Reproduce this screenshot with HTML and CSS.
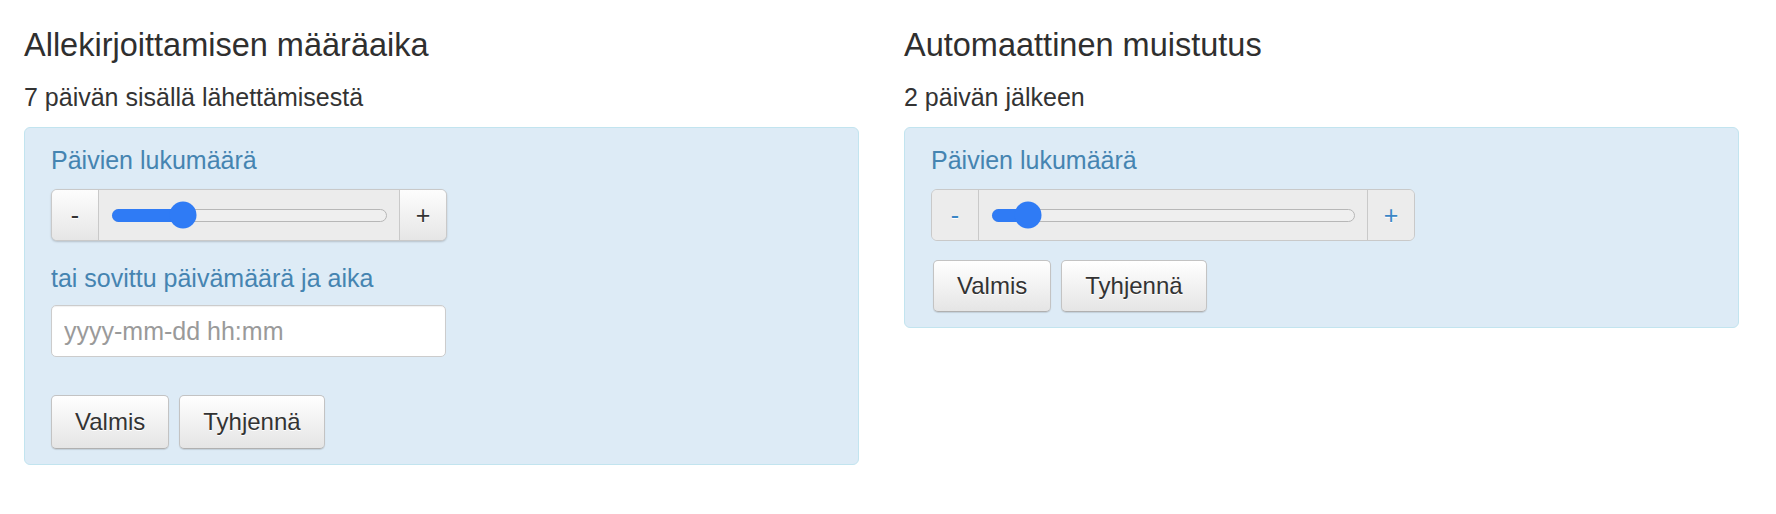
FILE: index.html
```html
<!DOCTYPE html>
<html lang="fi">
<head>
<meta charset="utf-8">
<title>Määräaika</title>
<link rel="stylesheet" href="styles.css">
</head>
<body>
<div class="page">
  <section class="col">
    <h3 class="title">Allekirjoittamisen määräaika</h3>
    <p class="summary">7 päivän sisällä lähettämisestä</p>
    <div class="panel">
      <div class="label">Päivien lukumäärä</div>
      <div class="slider slider-raised" style="width:396px">
        <button class="step step-raised">-</button>
        <div class="mid">
          <div class="track">
            <div class="fill" style="width:25.6%"></div>
            <div class="thumb" style="left:25.6%"></div>
          </div>
        </div>
        <button class="step step-raised step-right">+</button>
      </div>
      <div class="label">tai sovittu päivämäärä ja aika</div>
      <input class="date-input" type="text" placeholder="yyyy-mm-dd hh:mm">
      <div class="actions actions-spaced">
        <button class="btn">Valmis</button>
        <button class="btn">Tyhjennä</button>
      </div>
    </div>
  </section>
  <section class="col">
    <h3 class="title">Automaattinen muistutus</h3>
    <p class="summary">2 päivän jälkeen</p>
    <div class="panel">
      <div class="label">Päivien lukumäärä</div>
      <div class="slider" style="width:484px">
        <button class="step step-flat">-</button>
        <div class="mid">
          <div class="track">
            <div class="fill" style="width:9.6%"></div>
            <div class="thumb" style="left:9.6%"></div>
          </div>
        </div>
        <button class="step step-flat step-right">+</button>
      </div>
      <div class="actions actions-tight">
        <button class="btn btn-short">Valmis</button>
        <button class="btn btn-short">Tyhjennä</button>
      </div>
    </div>
  </section>
</div>
</body>
</html>
```

FILE: styles.css
```css
* { box-sizing: border-box; }

html, body {
  margin: 0;
  background: #ffffff;
}

body {
  font-family: "Liberation Sans", Arial, Helvetica, sans-serif;
  color: #333333;
}

.page {
  display: grid;
  grid-template-columns: 835px 835px;
  column-gap: 45px;
  padding: 27px 0 0 24px;
}

.title {
  margin: 0;
  font-size: 32.5px;
  line-height: 36px;
  font-weight: normal;
  color: #2f2f2f;
}

.summary {
  margin: 16px 0 0;
  font-size: 25px;
  line-height: 36px;
}

.panel {
  margin-top: 12px;
  background: #ddebf6;
  border: 1px solid #c2e4ef;
  border-radius: 6px;
  padding: 14px 26px 15px 26px;
}

.label {
  font-size: 25px;
  line-height: 36px;
  color: #4584b1;
  margin-bottom: 11px;
}

.slider {
  display: flex;
  height: 52px;
  background: #ececec;
  border: 1px solid #c9c9c9;
  border-radius: 6px;
  margin-bottom: 19px;
}

.slider + .label {
  margin-bottom: 9px;
}

.slider-raised {
  box-shadow: 0 1px 2px rgba(0, 0, 0, 0.18);
}

.step {
  flex: 0 0 47px;
  border: 0;
  border-right: 1px solid #c9c9c9;
  margin: 0;
  padding: 0;
  font-family: "Liberation Sans", Arial, sans-serif;
  font-size: 25px;
  line-height: 50px;
  text-align: center;
  cursor: pointer;
}

.step-right {
  border-right: 0;
  border-left: 1px solid #c9c9c9;
}

.step-raised {
  background: linear-gradient(#fdfdfd, #e6e6e6);
  color: #333333;
  text-shadow: 0 1px 0 #ffffff;
}

.slider-raised .step:first-child { border-radius: 5px 0 0 5px; }
.slider-raised .step-right { border-radius: 0 5px 5px 0; }

.step-flat {
  background: #ececec;
  color: #3a86c6;
  text-shadow: 0 1px 0 #ffffff;
}

.slider .step-flat:first-child { border-radius: 5px 0 0 5px; }
.slider .step-flat.step-right { border-radius: 0 5px 5px 0; }

.mid {
  flex: 1 1 auto;
  display: flex;
  align-items: center;
  padding: 0 12px 0 13px;
}

.track {
  position: relative;
  flex: 1 1 auto;
  height: 13px;
  background: #efefef;
  border: 1px solid #b7b7b7;
  border-radius: 7px;
}

.fill {
  position: absolute;
  left: -1px;
  top: -1px;
  bottom: -1px;
  background: #2f7bf5;
  border-radius: 7px 0 0 7px;
}

.thumb {
  position: absolute;
  top: 50%;
  width: 27px;
  height: 27px;
  border-radius: 50%;
  background: #2f7bf5;
  transform: translate(-50%, -50%);
}

.date-input {
  display: block;
  width: 395px;
  height: 52px;
  padding: 0 12px;
  border: 1px solid #cccccc;
  border-radius: 5px;
  background: #ffffff;
  font-family: "Liberation Sans", Arial, sans-serif;
  font-size: 25px;
  color: #333333;
  box-shadow: inset 0 1px 1px rgba(0, 0, 0, 0.06);
}

.date-input::placeholder {
  color: #9a9a9a;
}

.actions {
  display: flex;
  gap: 10px;
}

.actions-spaced {
  margin-top: 38px;
}

.actions-tight {
  margin-top: 1px;
  margin-left: 2px;
}

.btn {
  height: 54px;
  padding: 0 23px;
  border: 1px solid #c3c3c3;
  border-bottom-color: #b0b0b0;
  border-radius: 5px;
  background: linear-gradient(#ffffff, #e5e5e5);
  box-shadow: 0 1px 1px rgba(0, 0, 0, 0.12);
  font-family: "Liberation Sans", Arial, sans-serif;
  font-size: 24px;
  color: #333333;
  text-shadow: 0 1px 0 #ffffff;
  cursor: pointer;
}

.btn-short {
  height: 52px;
}
```
